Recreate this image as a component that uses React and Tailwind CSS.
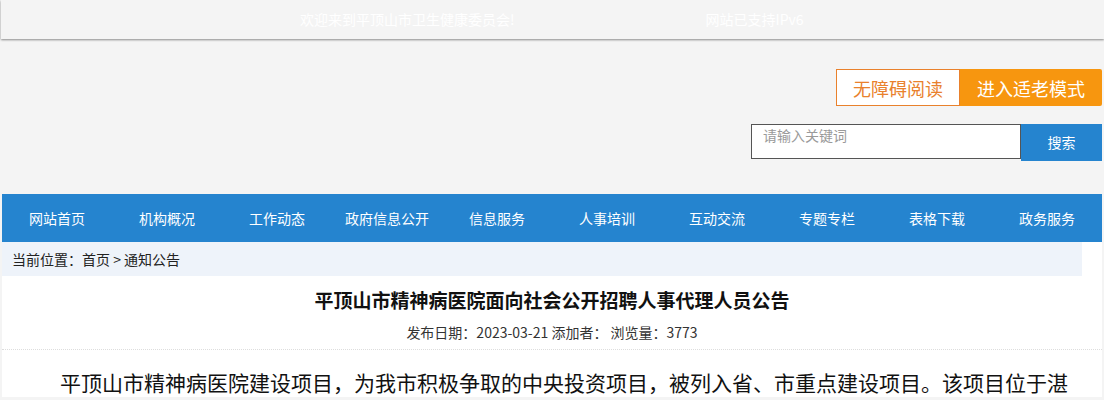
import React from "react";

const navItems = [
  "网站首页",
  "机构概况",
  "工作动态",
  "政府信息公开",
  "信息服务",
  "人事培训",
  "互动交流",
  "专题专栏",
  "表格下载",
  "政务服务",
];

const App = () => {
  return (
    <div
      className="min-h-[400px] bg-[#f4f4f4] text-[#333]"
      style={{ fontFamily: '"Noto Sans CJK SC", "Noto Sans", sans-serif' }}
    >
      {/* top welcome bar */}
      <div className="h-[39px] bg-[#f4f4f4] shadow-[0_1px_2px_#8a8a8a] ml-[1px]">
        <div className="flex h-full items-center text-[14px] text-white">
          <span className="ml-[299px]">欢迎来到平顶山市卫生健康委员会!</span>
          <span className="ml-[191px]">网站已支持IPv6</span>
        </div>
      </div>

      {/* header */}
      <div className="w-[1100px] mx-auto h-[155px] flex flex-col items-end">
        <div className="flex mt-[30px]">
          <button className="w-[124px] h-[37px] border border-[#e9812c] bg-white text-[#e9812c] text-[18px] leading-none">
            无障碍阅读
          </button>
          <button className="w-[142px] h-[37px] bg-[#f7960f] text-white text-[18px] leading-none rounded-r-[2px]">
            进入适老模式
          </button>
        </div>
        <div className="flex mt-[18px]">
          <div className="w-[270px] h-[35px] border border-[#555] bg-white px-[11px] text-[14px] leading-[20px] text-[#9a9a9a]">
            请输入关键词
          </div>
          <button className="w-[81px] h-[37px] bg-[#2584cf] text-white text-[14px]">
            搜索
          </button>
        </div>
      </div>

      {/* nav */}
      <div className="w-[1100px] mx-auto h-[48px] bg-[#2584cf] grid grid-cols-10">
        {navItems.map((item) => (
          <div key={item} className="flex items-center justify-center text-white text-[14px]">
            {item}
          </div>
        ))}
      </div>

      {/* content */}
      <div className="w-[1100px] mx-auto bg-white">
        <div className="w-[1080px] h-[34px] bg-[#eef3fa] flex items-center pl-[10px] text-[14px] text-[#222]">
          当前位置：首页 &gt; 通知公告
        </div>
        <div className="pt-[10px] text-center">
          <h1 className="text-[19px] font-bold text-[#111] leading-[28px]">
            平顶山市精神病医院面向社会公开招聘人事代理人员公告
          </h1>
          <div className="mt-[8px] text-[14px] text-[#333] leading-[20px]">
            发布日期：2023-03-21 添加者：&nbsp;浏览量：3773
          </div>
        </div>
        <div className="mt-[7px] border-t border-dotted border-[#ddd]"></div>
        <p className="pt-[17px] pl-[58px] text-[21px] leading-[30px] text-[#111] whitespace-nowrap overflow-hidden">
          平顶山市精神病医院建设项目，为我市积极争取的中央投资项目，被列入省、市重点建设项目。该项目位于湛
        </p>
      </div>
    </div>
  );
};

export default App;
